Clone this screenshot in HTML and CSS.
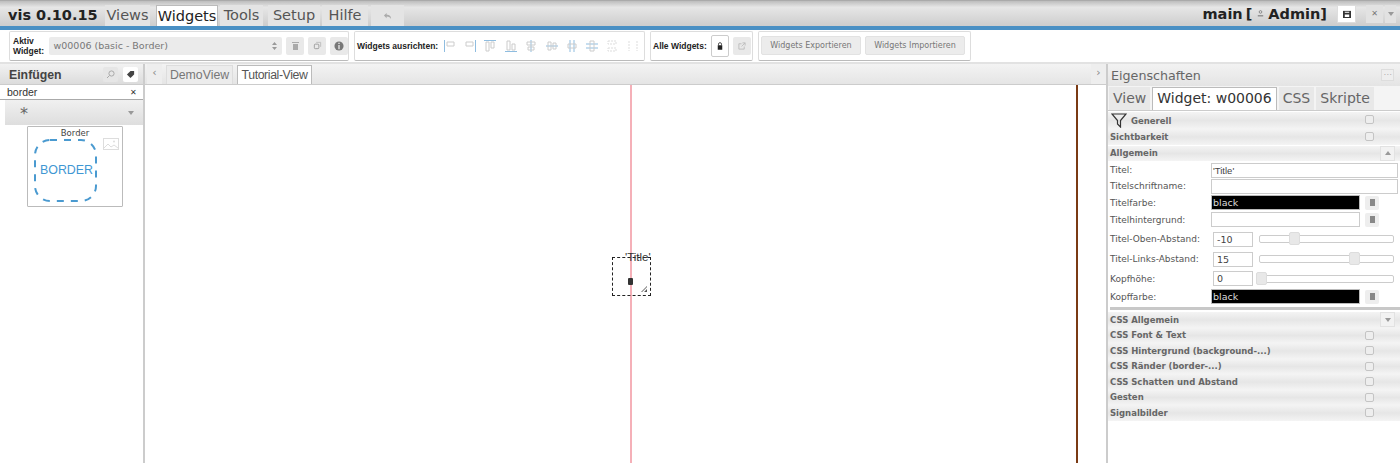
FILE: index.html
```html
<!DOCTYPE html>
<html lang="de">
<head>
  <meta charset="UTF-8">
  <title>vis 0.10.15</title>
  <link rel="stylesheet" href="styles.css">
</head>
<body>
  <header class="menubar">
    <div class="brand">vis 0.10.15</div>
    <nav class="menu-tabs">
      <span class="menu-tab tab-views">Views</span>
      <span class="menu-tab tab-widgets active">Widgets</span>
      <span class="menu-tab tab-tools">Tools</span>
      <span class="menu-tab tab-setup">Setup</span>
      <span class="menu-tab tab-hilfe">Hilfe</span>
      <span class="menu-tab tab-undo">
        <svg width="9" height="8" viewBox="0 0 10 9"><path d="M1 4l3-3v2c3 0 5 1 5 5-1-2-2-3-5-3v2z" fill="#aaa"/></svg>
      </span>
    </nav>
    <div class="session">
      <span class="session-name session-main">main [</span>
      <svg class="user-icon" width="7" height="7" viewBox="0 0 9 9"><circle cx="4.5" cy="2.5" r="1.7" fill="none" stroke="#777"/><path d="M1 7.5h7" stroke="#777" stroke-width="1.4"/></svg>
      <span class="session-name">Admin]</span>
      <span class="save-btn">
        <svg width="8" height="8" viewBox="0 0 9 9"><path d="M0 1h9v8H0z" fill="#333"/><path d="M2 2h5v1H2zM2 5h5v3H2z" fill="#fff"/></svg>
      </span>
      <span class="win-btn win-close">&#x2715;</span>
      <span class="win-btn win-more">
        <svg width="6" height="4" viewBox="0 0 6 4"><path d="M0 0h6L3 4z" fill="#999"/></svg>
      </span>
    </div>
  </header>

  <section class="toolbar">
    <div class="tool-group group-active">
      <div class="active-label">Aktiv<br>Widget:</div>
      <div class="widget-select">
        <span>w00006 (basic - Border)</span>
        <svg width="5" height="8" viewBox="0 0 5 8"><path d="M0 3l2.5-3L5 3zM0 5h5L2.5 8z" fill="#999"/></svg>
      </div>
      <span class="icon-btn"><svg width="7" height="9" viewBox="0 0 7 9"><path d="M0 1h7v1H0zM1 3h5v6H1z" fill="#aaa"/></svg></span>
      <span class="icon-btn"><svg width="9" height="9" viewBox="0 0 10 10"><rect x="1.5" y="3.5" width="5" height="5" rx="1" fill="none" stroke="#999"/><path d="M3.5 1.5h5v5" fill="none" stroke="#bbb"/></svg></span>
      <span class="icon-btn"><svg width="10" height="10" viewBox="0 0 11 11"><circle cx="5.5" cy="5.5" r="5" fill="#777"/><path d="M4.8 2h1.4v1.4H4.8zM4.8 4.4h1.4V9H4.8z" fill="#eee"/></svg></span>
    </div>

    <div class="tool-group group-align">
      <b class="tool-label">Widgets ausrichten:</b>
      <svg class="align-icon" width="14" height="14" viewBox="0 0 14 14"><path d="M1.5 1v12" stroke="#8fbde0"/><path d="M4 3h7v4H4z" fill="none" stroke="#ccc"/></svg>
      <svg class="align-icon" width="14" height="14" viewBox="0 0 14 14"><path d="M12.5 1v12" stroke="#8fbde0"/><path d="M3 3h7v4H3z" fill="none" stroke="#ccc"/></svg>
      <svg class="align-icon" width="14" height="14" viewBox="0 0 14 14"><path d="M1 1.5h12" stroke="#8fbde0"/><path d="M3 3h3v9H3zM8 3h3v6H8z" fill="none" stroke="#ccc"/></svg>
      <svg class="align-icon" width="14" height="14" viewBox="0 0 14 14"><path d="M1 12.5h12" stroke="#8fbde0"/><path d="M3 2h3v9H3zM8 5h3v6H8z" fill="none" stroke="#ccc"/></svg>
      <svg class="align-icon" width="14" height="14" viewBox="0 0 14 14"><path d="M7 1v12" stroke="#8fbde0"/><path d="M3 3h8v3H3zM4 8h6v3H4z" fill="none" stroke="#ccc"/></svg>
      <svg class="align-icon" width="14" height="14" viewBox="0 0 14 14"><path d="M1 7h12" stroke="#8fbde0"/><path d="M3 3h3v8H3zM8 4h3v6H8z" fill="none" stroke="#ccc"/></svg>
      <svg class="align-icon" width="14" height="14" viewBox="0 0 14 14"><path d="M5 1v12M9 1v12" stroke="#8fbde0"/><path d="M3 5h8v4H3z" fill="none" stroke="#ccc"/></svg>
      <svg class="align-icon" width="14" height="14" viewBox="0 0 14 14"><path d="M1 5h12M1 9h12" stroke="#8fbde0"/><path d="M5 2h4v10H5z" fill="none" stroke="#ccc"/></svg>
      <svg class="align-icon" width="14" height="14" viewBox="0 0 14 14"><path d="M2 2h8v3H2zM2 9h8v3H2z" fill="none" stroke="#ddd" stroke-dasharray="2 1"/></svg>
      <svg class="align-icon" width="14" height="14" viewBox="0 0 14 14"><path d="M3 2v10M11 2v10" stroke="#ddd" stroke-dasharray="2 1"/></svg>
    </div>

    <div class="tool-group group-all">
      <b class="tool-label">Alle Widgets:</b>
      <span class="icon-btn lock-btn"><svg width="6" height="8" viewBox="0 0 8 10"><path d="M2 4V2.5a2 2 0 0 1 4 0V4" fill="none" stroke="#222"/><rect x="1" y="4" width="6" height="6" fill="#222"/></svg></span>
      <span class="icon-btn"><svg width="8" height="8" viewBox="0 0 9 9"><path d="M1 2h3M1 2v6h6V5M5 1h3v3M8 1L4 5" fill="none" stroke="#bbb"/></svg></span>
    </div>

    <div class="tool-group group-export">
      <span class="text-btn">Widgets Exportieren</span>
      <span class="text-btn">Widgets Importieren</span>
    </div>
  </section>

  <main class="workspace">
    <aside class="palette">
      <div class="palette-head">
        <span class="palette-title">Einfügen</span>
        <span class="head-btn"><svg width="9" height="9" viewBox="0 0 9 9"><circle cx="5.5" cy="3.5" r="2.6" fill="none" stroke="#aaa"/><path d="M3.5 5.5L1 8" stroke="#aaa"/></svg></span>
        <span class="head-btn head-btn-on"><svg width="9" height="9" viewBox="0 0 10 10"><path d="M5 1h4v4l-4 4-4-4z" fill="#444"/></svg></span>
      </div>
      <div class="palette-search"><span>border</span><span class="search-clear">&#x2715;</span></div>
      <div class="palette-select">
        <span class="star">*</span>
        <svg width="6" height="4" viewBox="0 0 6 4"><path d="M0 0h6L3 4z" fill="#999"/></svg>
      </div>
      <div class="widget-card">
        <div class="card-name">Border</div>
        <div class="card-preview">
          <svg class="card-dash" width="63" height="63" viewBox="0 0 63 63"><rect x="1" y="1" width="61" height="61" rx="15" fill="none" stroke="#4a9ad0" stroke-width="2" stroke-dasharray="7 7"/></svg>
          <span class="card-text">BORDER</span>
          <svg class="card-img" width="16" height="12" viewBox="0 0 16 12"><rect x=".5" y=".5" width="15" height="11" fill="none" stroke="#ddd"/><path d="M1 10l4-4 3 3 3-2 4 3" fill="none" stroke="#ddd"/><circle cx="11" cy="3.5" r="1" fill="#ddd"/></svg>
        </div>
      </div>
    </aside>

    <section class="stage">
      <div class="view-tabs">
        <span class="view-nav">&#x2039;</span>
        <span class="view-tab tab-demo">DemoView</span>
        <span class="view-tab tab-tutorial active">Tutorial-View</span>
        <span class="view-nav view-next">&#x203A;</span>
      </div>
      <div class="canvas">
        <div class="guide-red"></div>
        <div class="guide-brown"></div>
        <div class="canvas-widget">
          <span class="widget-title">'Title'</span>
          <span class="widget-handle"></span>
          <svg class="widget-resize" width="6" height="6" viewBox="0 0 6 6"><path d="M0 6l6-6v1L1 6zM3 6l3-3v3z" fill="#555"/></svg>
        </div>
      </div>
    </section>

    <aside class="props">
      <div class="props-head">
        <span>Eigenschaften</span>
        <span class="props-collapse">&#x22EF;</span>
      </div>
      <div class="props-tabs">
        <span class="prop-tab">View</span>
        <span class="prop-tab active">Widget: w00006</span>
        <span class="prop-tab">CSS</span>
        <span class="prop-tab">Skripte</span>
      </div>
      <div class="props-list">
        <div class="group-row row-filter">
          <svg width="16" height="15" viewBox="0 0 16 15"><path d="M1 1h14L9.5 7.5V14L6.5 11V7.5z" fill="none" stroke="#333" stroke-width="1.2"/></svg>
          <span>Generell</span><i class="check"></i>
        </div>
        <div class="group-row"><span>Sichtbarkeit</span><i class="check"></i></div>
        <div class="group-row row-allgemein"><span>Allgemein</span><b class="fold"><svg width="6" height="4" viewBox="0 0 6 4"><path d="M0 4h6L3 0z" fill="#999"/></svg></b></div>

        <div class="form">
          <div class="form-row row-16"><label>Titel:</label><span class="field field-wide">'Title'</span></div>
          <div class="form-row row-16"><label>Titelschriftname:</label><span class="field field-wide"></span></div>
          <div class="form-row row-17"><label>Titelfarbe:</label><span class="field field-color">black</span><span class="pick"><i></i></span></div>
          <div class="form-row row-17"><label>Titelhintergrund:</label><span class="field field-empty"></span><span class="pick"><i></i></span></div>
          <div class="form-row row-20 row-gap"><label>Titel-Oben-Abstand:</label><span class="field field-num">-10</span><span class="slider"><i class="knob knob-oben"></i></span></div>
          <div class="form-row row-20"><label>Titel-Links-Abstand:</label><span class="field field-num">15</span><span class="slider"><i class="knob knob-links"></i></span></div>
          <div class="form-row row-19"><label>Kopfhöhe:</label><span class="field field-num">0</span><span class="slider"><i class="knob knob-kopf"></i></span></div>
          <div class="form-row row-17"><label>Kopffarbe:</label><span class="field field-color">black</span><span class="pick"><i></i></span></div>
        </div>

        <div class="group-row"><span>CSS Allgemein</span><b class="fold"><svg width="6" height="4" viewBox="0 0 6 4"><path d="M0 0h6L3 4z" fill="#999"/></svg></b></div>
        <div class="group-row"><span>CSS Font &amp; Text</span><i class="check"></i></div>
        <div class="group-row"><span>CSS Hintergrund (background-...)</span><i class="check"></i></div>
        <div class="group-row"><span>CSS Ränder (border-...)</span><i class="check"></i></div>
        <div class="group-row"><span>CSS Schatten und Abstand</span><i class="check"></i></div>
        <div class="group-row"><span>Gesten</span><i class="check"></i></div>
        <div class="group-row"><span>Signalbilder</span><i class="check"></i></div>
      </div>
    </aside>
  </main>
</body>
</html>
```

FILE: styles.css
```css
:root {
  --tab-grey: #e4e4e4;
  --blue: #4a90c4;
  --sans: "DejaVu Sans", sans-serif;
  --arial: "Liberation Sans", sans-serif;
}

* { box-sizing: border-box; }

html, body { height: 463px; overflow: hidden; }

body {
  margin: 0;
  background: #fff;
  color: #333;
  font-family: var(--sans);
  display: flex;
  flex-direction: column;
}

/* top menu */
.menubar {
  height: 30px;
  flex: none;
  display: flex;
  align-items: flex-end;
  padding: 0 4px 0 8px;
  background: linear-gradient(#bdbdbd, #e6e6e6 25%, #cdcdcd);
  border-top: 1px solid #aaa;
  border-bottom: 4px solid var(--blue);
}

.brand {
  width: 97px;
  height: 21px;
  font-size: 14.5px;
  font-weight: 700;
  line-height: 20px;
  color: #222;
  white-space: nowrap;
}

.menu-tabs { display: flex; height: 21px; }

.menu-tab {
  display: block;
  background: var(--tab-grey);
  color: #555;
  font-size: 14.5px;
  line-height: 21px;
  text-align: center;
  white-space: nowrap;
}

.menu-tab.active { background: #fff; color: #222; border: 1px solid #bbb; border-bottom: 0; line-height: 20px; }
.tab-views { width: 45px; margin-right: 6px; }
.tab-widgets { width: 62px; margin-right: 2px; }
.tab-tools { width: 43px; margin-right: 5px; }
.tab-setup { width: 52px; margin-right: 2px; }
.tab-hilfe { width: 46px; margin-right: 3px; }
.tab-undo { width: 33px; }

.session { margin-left: auto; display: flex; align-items: center; height: 25px; }
.session-name { font-size: 14.5px; font-weight: 700; color: #222; white-space: nowrap; }
.session-main { word-spacing: -2px; }
.user-icon { margin: 0 4px 0 5px; }
.save-btn {
  width: 19px; height: 18px; margin-left: 10px; background: #fff; border: 1px solid #ddd;
  display: flex; align-items: center; justify-content: center;
}
.win-btn {
  height: 18px; background: #e2e2e2; font-size: 8px; color: #777;
  display: flex; align-items: center; justify-content: center;
}
.win-close { width: 17px; margin-left: 10px; }
.win-more { width: 11px; margin-left: 2px; }

/* tool bar */
.toolbar {
  height: 34px;
  flex: none;
  display: flex;
  align-items: center;
  gap: 5px;
  padding: 0 0 1px 9px;
  border-bottom: 2px solid #e2e2e2;
}

.tool-group {
  height: 30px;
  display: flex;
  align-items: center;
  background: #fff;
  border: 1px solid #ddd;
  border-bottom-color: #bbb;
  border-radius: 2px;
}

.group-active { width: 340px; padding-left: 3px; gap: 4px; }
.active-label { width: 32px; font: 700 8.5px/10px var(--arial); color: #222; }
.widget-select {
  width: 237px; height: 18px; padding: 0 5px; background: #ebebeb; border-radius: 2px;
  font-size: 9.5px; color: #777; line-height: 18px;
  display: flex; justify-content: space-between; align-items: center;
}
.icon-btn {
  width: 18px; height: 18px; background: #e9e9e9; border-radius: 2px;
  display: flex; align-items: center; justify-content: center; flex: none;
}

.tool-label { font: 700 8.5px var(--arial); color: #222; white-space: nowrap; }
.group-align { width: 291px; padding-left: 2px; gap: 6.4px; }
.group-align .tool-label { margin-right: -2px; }
.group-all { width: 103px; padding-left: 2px; gap: 4px; }
.lock-btn { background: #fff; border: 1px solid #ccc; height: 22px; }
.group-export { width: 213px; padding-left: 2px; gap: 4px; }
.text-btn {
  width: 100px; height: 19px; background: #ececec; border: 1px solid #e2e2e2; border-radius: 2px;
  font-size: 8px; line-height: 17px; color: #777; text-align: center; white-space: nowrap;
}

.workspace { flex: 1; display: flex; min-height: 0; }

/* left palette */
.palette { width: 145px; flex: none; border-right: 2px solid #ccc; }
.palette-head {
  height: 21px; display: flex; align-items: center; gap: 2px; padding: 1px 5px 0 9px;
  background: linear-gradient(#f2f2f2, #dcdcdc);
  border-bottom: 1px solid #ccc;
}
.palette-title { font: 700 12.3px var(--arial); color: #444; margin-right: auto; }
.head-btn {
  width: 15px; height: 15px; background: #e6e6e6; border-radius: 2px;
  display: flex; align-items: center; justify-content: center;
}
.head-btn-on { background: #fff; margin-left: 3px; }
.palette-search {
  height: 15px; display: flex; justify-content: space-between; align-items: center;
  padding: 0 6px 0 7px; font: 10.5px var(--arial); color: #333;
  border-bottom: 1px solid #aaa;
}
.search-clear { font-size: 8px; }
.palette-select {
  height: 25px; margin-left: 5px; display: flex; justify-content: space-between; align-items: center;
  padding: 0 9px 0 15px; background: linear-gradient(#f0f0f0, #dedede);
}
.star { font: 16px var(--sans); color: #666; padding-top: 1px; }
.widget-card {
  width: 96px; height: 81px; margin: 1px 0 0 27px;
  border: 1px solid #bbb; border-radius: 1px; background: #fff;
}
.card-name { font: 8.5px/12px var(--sans); color: #444; text-align: center; height: 12px; }
.card-preview { position: relative; height: 68px; }
.card-dash { position: absolute; left: 6px; top: 0; }
.card-text { position: absolute; left: 12px; top: 24px; font: 12.4px var(--arial); color: #3f97d3; }
.card-img { position: absolute; right: 3px; top: -1px; }

/* centre */
.stage { flex: 1; min-width: 0; display: flex; flex-direction: column; }
.view-tabs {
  height: 21px; flex: none; display: flex; align-items: flex-end; padding-left: 2px; gap: 4px;
  background: linear-gradient(#f3f3f3, #e5e5e5);
  border-bottom: 1px solid #ccc;
}
.view-nav { width: 15px; height: 20px; text-align: center; font: 11px/18px var(--sans); color: #888; background: #eee; }
.view-next { margin-left: auto; }
.view-tab {
  height: 19px; background: #ececec; color: #777; text-align: center;
  font: 12.3px/19px var(--arial); border: 1px solid #ddd; border-bottom: 0; white-space: nowrap;
}
.view-tab.active { background: #fff; color: #555; border-color: #bbb; }
.tab-demo { width: 67px; }
.tab-tutorial { width: 75px; letter-spacing: -.4px; }
.canvas { flex: 1; position: relative; overflow: hidden; }
.guide-red { position: absolute; left: 485px; top: 0; bottom: 0; width: 2px; background: #f5b0b8; }
.guide-brown { position: absolute; left: 931px; top: 0; bottom: 0; width: 2px; background: #7a3a14; }
.canvas-widget {
  position: absolute; left: 467px; top: 172px; width: 39px; height: 39px;
  border: 1px dashed #222;
}
.widget-title { position: absolute; left: 12px; top: -7px; font: 11.5px var(--arial); color: #333; white-space: nowrap; }
.widget-handle { position: absolute; left: 15px; top: 20px; width: 5px; height: 7px; background: #333; border-radius: 1px; }
.widget-resize { position: absolute; right: 3px; bottom: 3px; }

/* right properties panel */
.props { width: 294px; flex: none; border-left: 2px solid #ccc; display: flex; flex-direction: column; }
.props-head {
  height: 22px; flex: none; display: flex; justify-content: space-between; align-items: center;
  padding: 0 6px 0 3px; background: linear-gradient(#f2f2f2, #e4e4e4);
  font-size: 12.7px; color: #666;
}
.props-collapse {
  width: 13px; height: 12px; border: 1px solid #ddd; background: #eee;
  font-size: 8px; line-height: 9px; text-align: center; color: #aaa;
}
.props-tabs {
  height: 25px; flex: none; display: flex; align-items: flex-end; gap: 2px; padding-left: 1px;
  border-bottom: 1px solid #ccc; background: #f4f4f4;
}
.prop-tab { height: 23px; padding: 0 4px; font-size: 14px; line-height: 23px; background: #e8e8e8; color: #666; white-space: nowrap; }
.prop-tab.active { background: #fff; color: #333; border: 1px solid #bbb; border-bottom: 0; line-height: 21px; }
.props-list { padding-top: 1px; }
.group-row {
  height: 15.5px; display: flex; align-items: center; padding-left: 2px; position: relative;
  font-size: 8.5px; font-weight: 700; color: #666;
  background: linear-gradient(#f4f4f4, #e6e6e6 50%, #f4f4f4);
}
.group-row.row-filter svg { margin-right: 4px; margin-left: 1px; }
.row-filter { height: 17px; }
.row-allgemein { margin-top: 1px; }
.check {
  position: absolute; left: 257px; top: 3px; width: 9px; height: 9px;
  background: #eee; border: 1px solid #c4c4c4; border-radius: 2px;
}
.fold {
  position: absolute; left: 272px; top: 0; width: 15px; height: 15px; background: #f2f2f2; border: 1px solid #e2e2e2;
  display: flex; align-items: center; justify-content: center;
}
.form { padding: 1px 0 2px; border-bottom: 3px solid #c8c8c8; margin: 0 0 2px 2px; }
.form-row { display: flex; align-items: center; font: 9px var(--sans); color: #555; }
.form-row label { width: 101px; flex: none; white-space: nowrap; }
.row-16 { height: 16px; }
.row-17 { height: 17px; }
.row-19 { height: 19px; }
.row-20 { height: 20px; }
.row-gap { margin-top: 1px; }
.field {
  display: block; height: 15px; border: 1px solid #ccc; background: #fff;
  font: 9.5px/13px var(--sans); color: #444; padding-left: 1px; white-space: nowrap; flex: none;
}
.field-wide { width: 187px; font-family: var(--arial); }
.field-color { width: 149px; background: #000; color: #ddd; border-color: #bbb; }
.field-empty { width: 149px; }
.field-num { width: 40px; margin-left: 2px; padding-left: 3px; }
.pick {
  width: 14px; height: 14px; margin-left: 5px; background: #eee; border-radius: 2px;
  display: flex; align-items: center; justify-content: center;
}
.pick i { width: 5px; height: 7px; background: #888; display: block; }
.slider {
  width: 135px; height: 8px; margin-left: 6px; position: relative;
  border: 1px solid #ccc; border-radius: 2px; background: #fff;
}
.knob {
  position: absolute; top: -4px; width: 11px; height: 13px; background: #e8e8e8;
  border: 1px solid #ddd; border-radius: 2px;
}
.knob-oben { left: 29px; }
.knob-links { left: 89px; }
.knob-kopf { left: -4px; }
```
